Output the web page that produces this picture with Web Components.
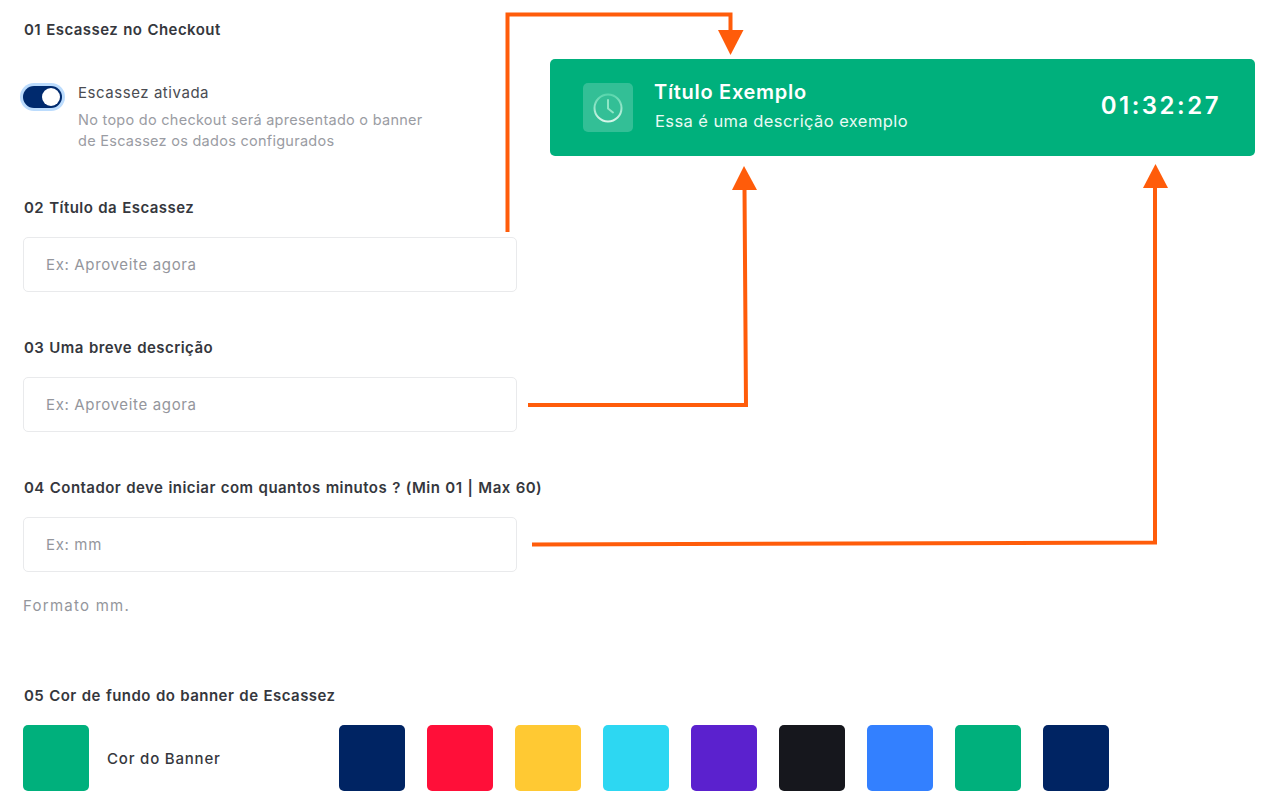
<!doctype html>
<html lang="pt-BR"><head><meta charset="utf-8"><title>Escassez</title>
<style>
html,body{margin:0;padding:0;background:#fff;height:806px;overflow:hidden}
body{font-family:Inter,"Noto Sans",sans-serif;color:#35373d;position:relative}
.page{display:flex;flex-direction:column;padding:20px 0 0 23px}
.top{display:flex;gap:33px;align-items:flex-start}
.form{width:494px;display:flex;flex-direction:column}
.gap43{margin-top:43px}.gap46{margin-top:46px}.gap47{margin-top:47px}.gap19{margin-top:19px}.gap24{margin-top:24px}.gap70{margin-top:70px}
</style></head><body>
<template id="t-label"><style>:host{display:block;font-size:15px;font-weight:600;line-height:20px;height:20px;letter-spacing:.45px;word-spacing:.8px;white-space:nowrap;color:#35373d;padding-left:1px}</style><slot></slot></template>
<template id="t-toggle"><style>
:host{display:flex;gap:16px;align-items:flex-start}
.track{width:39px;height:22px;border-radius:11px;background:#002a6e;box-shadow:0 0 0 3px #bcdcfd;margin-top:3px;display:flex;align-items:center;justify-content:flex-end;padding-right:2px;box-sizing:border-box;flex:none}
.knob{width:18px;height:18px;border-radius:50%;background:#fff}
.t{font-size:15px;line-height:20px;letter-spacing:.55px;color:#4a4c52}
.d{font-size:14.5px;line-height:21px;letter-spacing:.27px;color:#9a9ca3;margin-top:6px;white-space:nowrap}
</style><div class="track"><div class="knob"></div></div><div><div class="t"><slot name="title"></slot></div><div class="d"><slot></slot></div></div></template>
<template id="t-field"><style>:host{display:flex;align-items:center;height:55px;box-sizing:border-box;border:1px solid #e9eaec;border-radius:5px;padding-left:22px;font-size:15px;letter-spacing:.65px;color:#94969c;background:#fff}</style><slot></slot></template>
<template id="t-hint"><style>:host{display:block;font-size:15px;line-height:20px;letter-spacing:1.25px;color:#94969c}</style><slot></slot></template>
<template id="t-swatch"><style>:host{display:block;width:66px;height:66px;border-radius:5px;background:var(--c);flex:none}</style></template>
<template id="t-colors"><style>
:host{display:flex;align-items:center}
.name{width:232px;margin-left:18px;font-size:15px;font-weight:500;letter-spacing:.8px;color:#35373d;flex:none;box-sizing:border-box}
.list{display:flex;gap:22px}
</style><x-swatch style="--c:#00b07c"></x-swatch><div class="name"><slot name="name"></slot></div><div class="list"><slot></slot></div></template>
<template id="t-banner"><style>
:host{display:flex;align-items:center;width:705px;height:97px;margin-top:39px;box-sizing:border-box;padding:0 34px 0 33px;border-radius:5px;background:#00b07c;color:#fff}
.tile{width:50px;height:49px;border-radius:5px;background:rgba(255,255,255,.2);display:flex;align-items:center;justify-content:center;flex:none;margin-right:21px}
.txt{flex:1;display:flex;flex-direction:column;gap:6px;margin-top:-4px}
.h{font-size:20px;font-weight:600;line-height:24px;letter-spacing:.7px}
.s{font-size:16.5px;line-height:22px;letter-spacing:.42px;color:#eafaf4;margin-left:1px}
.time{font-size:24px;font-weight:600;letter-spacing:2.5px;margin-top:-4px}
</style><div class="tile"><svg width="34" height="34" viewBox="0 0 34 34" fill="none"><defs><linearGradient id="cg" x1="0" y1="0" x2="0" y2="1"><stop offset="0" stop-color="#5ad6ad"/><stop offset="1" stop-color="#d8f6ea"/></linearGradient></defs><circle cx="17" cy="17" r="13.5" stroke="url(#cg)" stroke-width="2"/><path d="M17 9v8.500l5 4" stroke="#8fe6c6" stroke-width="2" stroke-linecap="round" stroke-linejoin="round"/></svg></div><div class="txt"><div class="h"><slot name="title"></slot></div><div class="s"><slot name="desc"></slot></div></div><div class="time"><slot name="time"></slot></div></template>
<template id="t-arrows"><style>:host{position:absolute;left:0;top:0;width:1270px;height:806px;pointer-events:none}svg{display:block}</style>
<svg width="1270" height="806" viewBox="0 0 1270 806" fill="none"><g stroke="#ff5c0a" stroke-width="4" stroke-linejoin="miter"><path d="M507.500 232V14.500H730.500V32"/><path d="M528 405H746L744.500 188"/><path d="M532 544.500L1155 542.500V186"/></g><g fill="#ff5c0a"><path d="M718 30H743.500L730.500 55Z"/><path d="M732 190H757L744 166Z"/><path d="M1143 188H1168L1155.500 164Z"/></g></svg></template>

<div class="page">
<div class="top">
<div class="form">
<x-label>01 Escassez no Checkout</x-label>
<x-toggle class="gap43"><span slot="title">Escassez ativada</span>No topo do checkout será apresentado o banner<br>de Escassez os dados configurados</x-toggle>
<x-label class="gap47">02 Título da Escassez</x-label>
<x-field class="gap19">Ex: Aproveite agora</x-field>
<x-label class="gap46">03 Uma breve descrição</x-label>
<x-field class="gap19">Ex: Aproveite agora</x-field>
<x-label class="gap46">04 Contador deve iniciar com quantos minutos ? (Min 01 | Max 60)</x-label>
<x-field class="gap19">Ex: mm</x-field>
<x-hint class="gap24">Formato mm.</x-hint>
</div>
<x-banner><span slot="title">Título Exemplo</span><span slot="desc">Essa é uma descrição exemplo</span><span slot="time">01:32:27</span></x-banner>
</div>
<x-label class="gap70">05 Cor de fundo do banner de Escassez</x-label>
<x-colors class="gap19"><span slot="name">Cor do Banner</span>
<x-swatch style="--c:#002463"></x-swatch><x-swatch style="--c:#ff0f39"></x-swatch><x-swatch style="--c:#ffc933"></x-swatch><x-swatch style="--c:#2dd7f2"></x-swatch><x-swatch style="--c:#5b21ce"></x-swatch><x-swatch style="--c:#16171d"></x-swatch><x-swatch style="--c:#3380ff"></x-swatch><x-swatch style="--c:#00b07c"></x-swatch><x-swatch style="--c:#002463"></x-swatch>
</x-colors>
</div>
<x-arrows></x-arrows>
<script>
for (const [tag,id] of [['x-label','t-label'],['x-toggle','t-toggle'],['x-field','t-field'],['x-hint','t-hint'],['x-swatch','t-swatch'],['x-colors','t-colors'],['x-banner','t-banner'],['x-arrows','t-arrows']]) {
  customElements.define(tag, class extends HTMLElement {
    constructor(){super();this.attachShadow({mode:'open'}).appendChild(document.getElementById(id).content.cloneNode(true));}
  });
}
</script>
</body></html>
